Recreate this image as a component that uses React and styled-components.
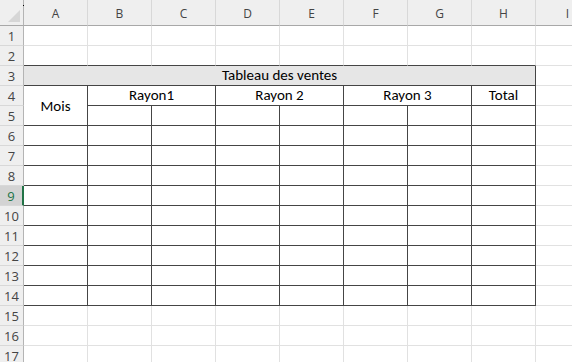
import React from "react";
import styled, { createGlobalStyle } from "styled-components";

const GlobalStyle = createGlobalStyle`
    html, body {
        margin: 0;
        padding: 0;
        background: #ffffff;
        overflow: hidden;
    }
`;

const DARK = "#454545";
const GRID = "#e1e1e1";

const Sheet = styled.div`
    display: grid;
    grid-template-columns: 24px repeat(9, 64px);
    grid-template-rows: 26px repeat(17, 20px);
    width: 572px;
    height: 362px;
    overflow: hidden;
    background: #ffffff;
`;

const Corner = styled.div`
    position: relative;
    grid-row: 1;
    grid-column: 1;
    background: #efefef;
    border-right: 1px solid #b4b4b4;
    border-bottom: 1px solid #a8a8a8;
    box-sizing: border-box;

    &::after {
        content: "";
        position: absolute;
        right: 3px;
        bottom: 3px;
        width: 0;
        height: 0;
        border-left: 12px solid transparent;
        border-bottom: 12px solid #d6d6d6;
    }
`;

const Dot = styled.span`
    position: absolute;
    left: 23px;
    top: 5px;
    width: 1px;
    height: 1px;
    background: #000;
    z-index: 2;
`;

const ColHeader = styled.div`
    grid-row: 1;
    grid-column: ${(p) => p.$col};
    background: #efefef;
    border-right: 1px solid #d8d8d8;
    border-bottom: 1px solid #a8a8a8;
    box-sizing: border-box;
    display: flex;
    align-items: center;
    justify-content: center;
    padding-top: 1px;
    font-family: "Open Sans", "Noto Sans", sans-serif;
    font-size: 12px;
    color: #444444;
`;

const RowHeader = styled.div`
    grid-row: ${(p) => p.$row};
    grid-column: 1;
    background: ${(p) => (p.$active ? "#d3d3d3" : "#efefef")};
    border-right: ${(p) => (p.$active ? "2px solid #217346" : "1px solid #b4b4b4")};
    border-bottom: 1px solid #d8d8d8;
    box-sizing: border-box;
    display: flex;
    align-items: center;
    justify-content: center;
    padding-top: 1px;
    font-family: "Open Sans", "Noto Sans", sans-serif;
    font-size: 13px;
    color: ${(p) => (p.$active ? "#217346" : "#444444")};
`;

const Cell = styled.div`
    grid-row: ${(p) => p.$row} / span ${(p) => p.$rowSpan || 1};
    grid-column: ${(p) => p.$col} / span ${(p) => p.$colSpan || 1};
    background: ${(p) => (p.$fill ? "#e6e6e6" : "#ffffff")};
    border-right: 1px solid ${(p) => (p.$right ? DARK : GRID)};
    border-bottom: 1px solid ${(p) => (p.$bottom ? DARK : GRID)};
    box-sizing: border-box;
    display: flex;
    justify-content: center;
    align-items: ${(p) => (p.$middle ? "center" : "flex-end")};
    padding-bottom: ${(p) => (p.$middle ? "0" : "1px")};
    font-family: Carlito, Calibri, Lato, sans-serif;
    font-size: 15px;
    color: #000000;
    white-space: nowrap;
    line-height: 18px;
`;

const LETTERS = ["A", "B", "C", "D", "E", "F", "G", "H", "I"];

// rows are 1-based spreadsheet rows, grid row = sheet row + 1
function buildCells() {
    const cells = [];
    for (let r = 1; r <= 17; r++) {
        const gr = r + 1;
        if (r === 3) {
            cells.push({ key: "A3", row: gr, col: 2, colSpan: 8, fill: true, right: true, bottom: true, text: "Tableau des ventes" });
            cells.push({ key: "I3", row: gr, col: 10 });
            continue;
        }
        if (r === 4) {
            cells.push({ key: "A4", row: gr, col: 2, rowSpan: 2, right: true, bottom: true, middle: true, text: "Mois" });
            cells.push({ key: "B4", row: gr, col: 3, colSpan: 2, right: true, bottom: true, text: "Rayon1" });
            cells.push({ key: "D4", row: gr, col: 5, colSpan: 2, right: true, bottom: true, text: "Rayon 2" });
            cells.push({ key: "F4", row: gr, col: 7, colSpan: 2, right: true, bottom: true, text: "Rayon 3" });
            cells.push({ key: "H4", row: gr, col: 9, right: true, bottom: true, text: "Total" });
            cells.push({ key: "I4", row: gr, col: 10 });
            continue;
        }
        for (let c = 0; c < 9; c++) {
            if (r === 5 && c === 0) continue;
            const inTable = c < 8 && r >= 5 && r <= 14;
            cells.push({
                key: LETTERS[c] + r,
                row: gr,
                col: c + 2,
                right: inTable,
                bottom: (inTable || r === 2) && c < 8,
            });
        }
    }
    return cells;
}

const cells = buildCells();

export default function App() {
    return (
        <>
            <GlobalStyle />
            <Sheet>
                <Corner>
                    <Dot />
                </Corner>
                {LETTERS.map((l, i) => (
                    <ColHeader key={l} $col={i + 2}>{l}</ColHeader>
                ))}
                {Array.from({ length: 17 }, (_, i) => (
                    <RowHeader key={i} $row={i + 2} $active={i + 1 === 9}>{i + 1}</RowHeader>
                ))}
                {cells.map((c) => (
                    <Cell
                        key={c.key}
                        $row={c.row}
                        $col={c.col}
                        $rowSpan={c.rowSpan}
                        $colSpan={c.colSpan}
                        $fill={c.fill}
                        $right={c.right}
                        $bottom={c.bottom}
                        $middle={c.middle}
                    >
                        {c.text}
                    </Cell>
                ))}
            </Sheet>
        </>
    );
}
